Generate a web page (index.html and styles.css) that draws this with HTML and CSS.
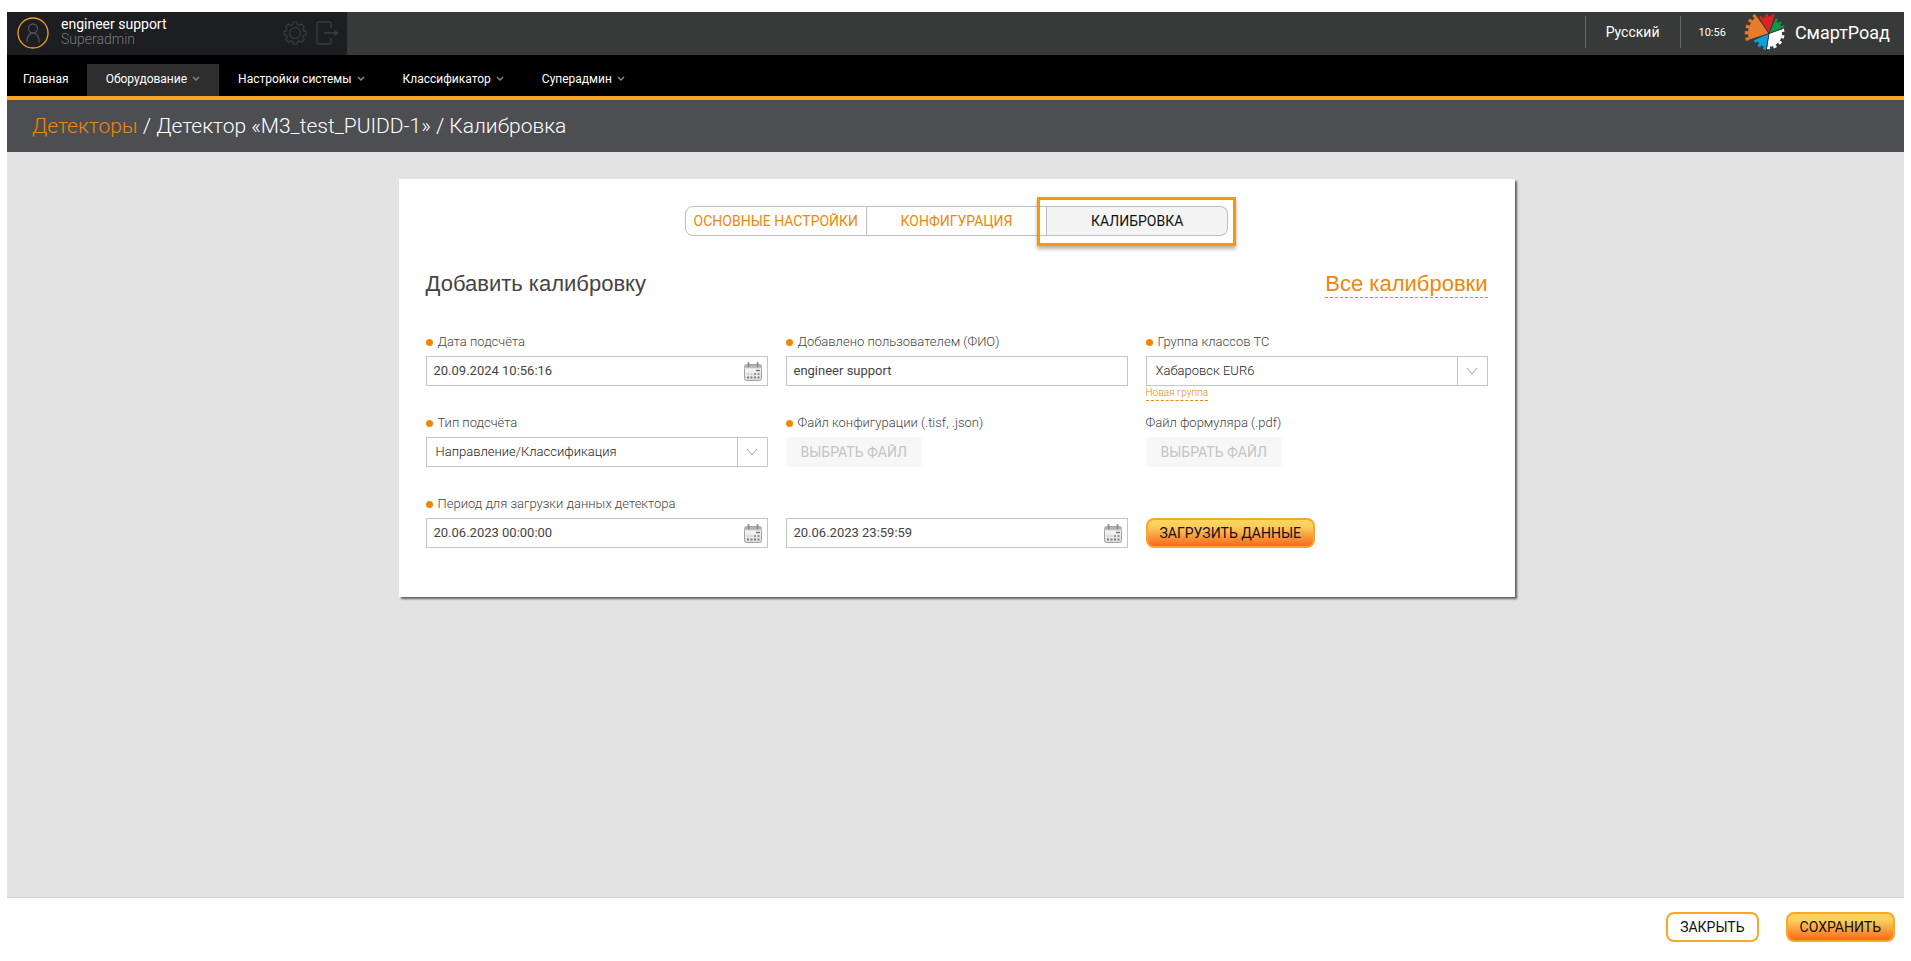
FILE: index.html
```html
<!DOCTYPE html>
<html lang="ru">
<head>
<meta charset="utf-8">
<title>Калибровка</title>
<link rel="stylesheet" href="styles.css">
</head>
<body>
<svg class="defs" width="0" height="0" aria-hidden="true">
  <defs>
    <linearGradient id="cal-fill" x1="0" y1="0" x2="0" y2="1"><stop offset="0" stop-color="#fff"/><stop offset="1" stop-color="#dcdcdc"/></linearGradient>
    <symbol id="calendar" viewBox="0 0 18 19">
      <rect x="0.5" y="2.5" width="17" height="16" rx="2" fill="url(#cal-fill)" stroke="#a2a2a2"/>
      <path d="M1 3h16v3H1z" fill="#b4b4b4"/>
      <path d="M0 6h18" stroke="#cfcfcf"/>
      <path d="M4 0h1v5H4zM13 0h1v5h-1z" fill="#8c8c8c" stroke="#8c8c8c" stroke-width=".6"/>
      <path d="M12 8.500h4M10 12h2M13.500 12h2" stroke="#777" stroke-width="1.500"/>
      <path d="M3 12h2M6.500 12h2" stroke="#c8c8c8" stroke-width="1.500"/>
      <path d="M3 15.500h2M6.500 15.500h2M10 15.500h2M13.500 15.500h2" stroke="#808080" stroke-width="2"/>
    </symbol>
    <symbol id="caret" viewBox="0 0 8 6"><path d="M1 1l3 3 3-3" fill="none" stroke="#858585" stroke-width="1.500"/></symbol>
    <symbol id="chevron" viewBox="0 0 12 9"><path d="M1 1l5 6 5-6" fill="none" stroke="#a0a0a0"/></symbol>
  </defs>
</svg>
<div class="page">
  <header class="topbar">
    <div class="user">
      <svg class="avatar" width="32" height="32" viewBox="0 0 32 32"><circle cx="16" cy="16" r="15" fill="none" stroke="#f5a31f" stroke-width="1.300"/><g fill="none" stroke="#505256" stroke-width="1.300"><circle cx="16" cy="11.500" r="4.500"/><path d="M10 25.500v-2c0-4 2.500-7.500 6-7.500s6 3.500 6 7.500v2"/></g></svg>
      <div class="who"><span class="name">engineer support</span><span class="role">Superadmin</span></div>
      <button class="icon-btn" aria-label="Настройки"><svg width="24" height="24" viewBox="0 0 24 24" fill="none" stroke="#3c3d40" stroke-width="1.200"><path d="M10 1h4l.6 2.700 1.700.700L18.700 3l2.600 2.700-1.500 2.300.700 1.700 2.500.6v3.600l-2.500.600-.700 1.700 1.500 2.300-2.600 2.700-2.400-1.500-1.700.700L14 23h-4l-.6-2.600-1.700-.700-2.400 1.500-2.600-2.700 1.500-2.300-.700-1.700-2.500-.600v-3.600l2.500-.6.700-1.700L2.700 5.700 5.300 3l2.400 1.400 1.700-.700z"/><circle cx="12" cy="12" r="5.500"/></svg></button>
      <button class="icon-btn" aria-label="Выход"><svg width="24" height="24" viewBox="0 0 24 24" fill="none" stroke="#3c3d40" stroke-width="1.300"><path d="M16 7V3a2 2 0 0 0-2-2H4a2 2 0 0 0-2 2v18a2 2 0 0 0 2 2h10a2 2 0 0 0 2-2v-4M9 12h11"/><path d="M20 10l3 2-3 2z" fill="#3c3d40"/></svg></button>
    </div>
    <div class="top-right">
      <button class="lang">Русский</button>
      <time class="clock">10:56</time>
      <a class="brand" href="#">
        <svg width="42" height="36" viewBox="0 0 42 36" fill="none">
          <g stroke="#e87b2b"><path d="M25 19.500L5 26A21 21 0 0 1 12.700 2.500z" fill="#e87b2b" stroke="none"/><path d="M3.600 26.500A22.500 22.500 0 0 1 11.800 1.300" stroke-width="3.400" stroke-dasharray="3.140"/></g>
          <g stroke="#d8232a"><path d="M25 19.500L15.700 5.200A17 17 0 0 1 30 3.200z" fill="#d8232a" stroke="none"/><path d="M15.100 4.200A18.200 18.200 0 0 1 30.300 2.100" stroke-width="2.800" stroke-dasharray="3.200"/></g>
          <g stroke="#0b9a48"><path d="M25 19.500L30.700 6.700A14 14 0 0 1 37.900 14z" fill="#0b9a48" stroke="none"/><path d="M31.200 5.600A15.200 15.200 0 0 1 39 13.600" stroke-width="2.800" stroke-dasharray="2.300"/></g>
          <g stroke="#fff"><path d="M25 19.500L37.300 15.300A13 13 0 0 1 23.200 32.400z" fill="#fff" stroke="none"/><path d="M38.400 14.900A14.200 14.200 0 0 1 23 33.600" stroke-width="2.800" stroke-dasharray="3.200"/></g>
          <g stroke="#0d9fdb"><path d="M25 19.500L22.300 33.200A14 14 0 0 1 12.200 25.200z" fill="#0d9fdb" stroke="none"/><path d="M22.100 34.400A15.200 15.200 0 0 1 11.100 25.700" stroke-width="2.800" stroke-dasharray="2.900"/></g>
          <path d="M25 19.500L14 2.500M25 19.500L31 3M25 19.500L39 14.500M25 19.500L22.500 35M25 19.500L5 26.200" stroke="#383a39" stroke-width="1"/>
        </svg>
        <span>СмартРоад</span>
      </a>
    </div>
  </header>
  <nav class="nav">
    <a href="#">Главная</a>
    <a href="#" class="active">Оборудование<svg width="8" height="6"><use href="#caret"/></svg></a>
    <a href="#">Настройки системы<svg width="8" height="6"><use href="#caret"/></svg></a>
    <a href="#">Классификатор<svg width="8" height="6"><use href="#caret"/></svg></a>
    <a href="#">Суперадмин<svg width="8" height="6"><use href="#caret"/></svg></a>
  </nav>
  <h1 class="crumbs"><a href="#">Детекторы</a> / Детектор «M3_test_PUIDD-1» / Калибровка</h1>
  <main class="content">
    <section class="card">
      <div class="tabs">
        <button>ОСНОВНЫЕ НАСТРОЙКИ</button>
        <button>КОНФИГУРАЦИЯ</button>
        <button class="current">КАЛИБРОВКА</button>
      </div>
      <div class="card-head">
        <h2>Добавить калибровку</h2>
        <a href="#">Все калибровки</a>
      </div>
      <form class="grid">
        <div class="field">
          <label class="req" for="date">Дата подсчёта</label>
          <div class="box"><input id="date" value="20.09.2024 10:56:16"><svg width="18" height="19"><use href="#calendar"/></svg></div>
        </div>
        <div class="field">
          <label class="req" for="author">Добавлено пользователем (ФИО)</label>
          <div class="box"><input id="author" value="engineer support"></div>
        </div>
        <div class="field">
          <label class="req" for="group">Группа классов ТС</label>
          <div class="box pick"><select id="group"><option>Хабаровск EUR6</option></select><span class="drop"><svg width="12" height="9"><use href="#chevron"/></svg></span></div>
          <a class="new" href="#">Новая группа</a>
        </div>
        <div class="field">
          <label class="req" for="kind">Тип подсчёта</label>
          <div class="box pick"><select id="kind"><option>Направление/Классификация</option></select><span class="drop"><svg width="12" height="9"><use href="#chevron"/></svg></span></div>
        </div>
        <div class="field">
          <label class="req" for="config">Файл конфигурации (.tisf, .json)</label>
          <button class="file" id="config" type="button" disabled>ВЫБРАТЬ ФАЙЛ</button>
        </div>
        <div class="field">
          <label for="sheet">Файл формуляра (.pdf)</label>
          <button class="file" id="sheet" type="button" disabled>ВЫБРАТЬ ФАЙЛ</button>
        </div>
        <div class="field">
          <label class="req" for="from">Период для загрузки данных детектора</label>
          <div class="box"><input id="from" value="20.06.2023 00:00:00"><svg width="18" height="19"><use href="#calendar"/></svg></div>
        </div>
        <div class="field end">
          <div class="box"><input aria-label="Конец периода" value="20.06.2023 23:59:59"><svg width="18" height="19"><use href="#calendar"/></svg></div>
        </div>
        <div class="field end">
          <button class="btn primary" type="button">ЗАГРУЗИТЬ ДАННЫЕ</button>
        </div>
      </form>
    </section>
  </main>
  <footer class="footer">
    <button class="btn">ЗАКРЫТЬ</button>
    <button class="btn primary">СОХРАНИТЬ</button>
  </footer>
</div>
</body>
</html>
```
FILE: styles.css
```css
*, ::before, ::after { box-sizing: border-box; }
body { margin: 0; background: #fff; font-family: Roboto, "Liberation Sans", sans-serif; font-size: 14px; color: #444; }
button, input, select { font: inherit; color: inherit; margin: 0; }
a { text-decoration: none; }
svg { display: block; flex: none; }
.defs { position: absolute; }
.page { min-height: 100vh; padding: 12px 7px 0; display: flex; flex-direction: column; }

.topbar { display: flex; justify-content: space-between; height: 43px; background: #383a39; }
.user { display: flex; align-items: center; width: 340px; padding: 0 8px 2px 10px; background: #1d1e22; }
.who { display: flex; flex-direction: column; flex: 1; padding-left: 12px; line-height: 15px; padding-bottom: 1px; }
.name { color: #fff; }
.role { color: #77797c; font-weight: 300; }
.icon-btn { border: 0; background: none; padding: 0; margin-left: 8px; }
.top-right { display: flex; align-items: center; color: #fff; padding: 0 14px 3px 0; }
.lang { height: 32px; padding: 0 20px; border: solid #666; border-width: 0 1px; background: none; }
.clock { font-size: 11px; padding: 0 18px; }
.brand { display: flex; align-items: center; gap: 9px; color: #fff; font-size: 18px; }

.nav { display: flex; height: 45px; padding-top: 9px; background: #000; border-bottom: 4px solid #faa424; }
.nav a { display: flex; align-items: center; gap: 5px; padding: 0 19px 2px; color: #fff; font-size: 12px; }
.nav a:first-child { padding: 0 18px 2px 16px; }
.nav .active { background: #2e2e2e; }
.crumbs { margin: 0; padding: 0 25px; background: #4d4e52; color: #fff; font-size: 21px; font-weight: 300; line-height: 52px; }
.crumbs a { color: #ee8709; }

.content { flex: 1; padding: 27px 23px 27px 25px; background: #e3e3e3; border-bottom: 1px solid #d2d2d2; }
.card { max-width: 1116px; margin: 0 auto; padding: 27px 27px 22px; background: #fff; box-shadow: 2px 2px 2px #5c605e; }
.tabs { display: flex; width: 543px; margin: 0 auto; position: relative; }
.tabs button { flex: 1; height: 30px; padding: 0; background: #fff; border: 1px solid #bfbfbf; border-left-width: 0; color: #ee8709; }
.tabs button:first-child { border-left-width: 1px; border-radius: 8px 0 0 8px; }
.tabs .current { background: #f4f4f4; color: #111; border-radius: 0 8px 8px 0; }
.tabs::after { content: ""; position: absolute; inset: -9px -8px -10px auto; width: 199px; border: 3px solid #fe9600; box-shadow: 0 3px 4px rgba(0, 0, 0, .3); pointer-events: none; }
.card-head { display: flex; justify-content: space-between; align-items: flex-start; margin: 35px 0 34px; font: 22px/26px "Liberation Sans", sans-serif; }
.card-head h2 { margin: 0; font: inherit; }
.card-head a { color: #ee8709; border-bottom: 1px dashed #ee8709; }

.grid { display: grid; grid-template-columns: repeat(3, 1fr); column-gap: 18px; grid-auto-rows: 81px; }
.field { display: flex; flex-direction: column; align-items: flex-start; }
.field.end { padding-top: 24px; }
.field label { height: 24px; line-height: 20px; font-size: 13px; font-weight: 300; }
.req::before { content: ""; display: inline-block; width: 7px; height: 7px; margin-right: 5px; border-radius: 50%; background: #ee8709; }
.box { display: flex; align-items: center; width: 100%; height: 30px; border: 1px solid #c6c6c6; padding-right: 5px; background: #fff; }
.box input, .box select { flex: 1; min-width: 0; height: 28px; border: 0; outline: 0; background: none; appearance: none; padding: 0 7px 2px; font-size: 13px; }
.pick { padding: 0; }
.box select { padding: 0 9px 2px; font-weight: 300; color: #222; }
.drop { display: flex; align-items: center; justify-content: center; width: 30px; height: 28px; border-left: 1px solid #c6c6c6; pointer-events: none; }
.new { font-size: 10px; line-height: 14px; font-weight: 300; color: #ee8709; border-bottom: 1px dashed #ee8709; }
.file { height: 30px; padding: 0 15px; border: 0; border-radius: 4px; background: #f7f7f7; color: #c4c4c4; }
.btn { height: 30px; padding: 0 12px; border: 2px solid #f9a728; border-radius: 8px; background: #fff; color: #111; }
.primary { background: linear-gradient(#fbd75e, #fbce5b 25%, #f9691c); }
.footer { display: flex; justify-content: flex-end; gap: 27px; padding: 14px 9px 19px; }
```
